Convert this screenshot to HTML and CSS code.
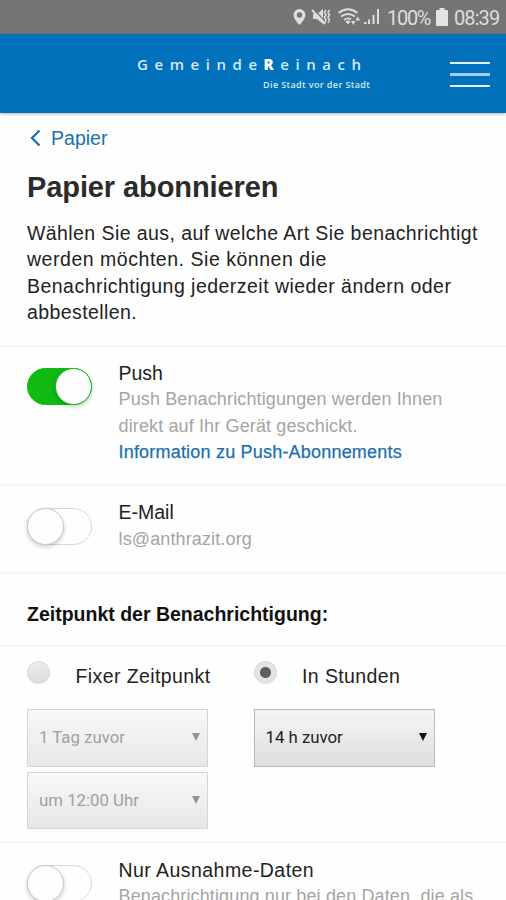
FILE: index.html
```html
<!DOCTYPE html>
<html lang="de">
<head>
<meta charset="utf-8">
<title>Papier abonnieren</title>
<link rel="stylesheet" href="styles.css">
</head>
<body>
<div class="status">
  <svg class="status-icons" width="90" height="20" viewBox="0 0 90 20">
    <path fill="#dedede" fill-rule="evenodd" d="M6.500 2a6 6 0 0 0-6 6c0 4 6 10 6 10s6-6 6-10a6 6 0 0 0-6-6zm0 3.200a2.700 2.700 0 1 1 0 5.400 2.700 2.700 0 0 1 0-5.400z"/>
    <path fill="#dedede" d="M20 7h4l6-5v15l-6-5h-4z"/>
    <path stroke="#757575" stroke-width="1.200" d="M21 2.500l12 13"/>
    <path stroke="#dedede" stroke-width="1.900" d="M19 3l13 14"/>
    <path fill="none" stroke="#dedede" stroke-width="1.500" d="M33 3l-1.500 2.500 1.500 2.500-1.500 2.500 1.500 2.500-1.500 3M36.500 3l-1.500 2.500 1.500 2.500-1.500 2.500 1.500 2.500-1.500 3"/>
    <path fill="none" stroke="#dedede" stroke-width="1.900" d="M45.500 6q9.500-7.500 19 0M48 9.500q7-5 14 0M51 13q4-3 7-.5"/>
    <path fill="#dedede" d="M52.500 14.500q2.500-2 5 0l-2.500 3zM58 14h4.500l-2.200 4zM62.500 13.500l2.200-4 2.300 4z"/>
    <path fill="#dedede" d="M71 15h2.500v2H71zM75 12.500h2v4.500h-2zM79.500 8h2v9h-2zM84 2h2v15h-2z"/>
  </svg>
  <span class="pct">100%</span>
  <svg class="battery" width="12" height="18" viewBox="0 0 12 18"><path fill="#e4e4e4" d="M3.500 0h5v2H11a1 1 0 0 1 1 1v14a1 1 0 0 1-1 1H1a1 1 0 0 1-1-1V3a1 1 0 0 1 1-1h2.500z"/></svg>
  <span class="clock">08:39</span>
</div>
<header class="header">
  <div class="brand">
    <div class="brand-name">Gemeinde<b>R</b>einach</div>
    <div class="brand-sub">Die Stadt vor der Stadt</div>
  </div>
  <div class="menu"><i></i><i></i><i></i></div>
</header>
<main>
  <section class="intro">
    <a class="back"><svg width="12" height="18" viewBox="0 0 12 18"><path d="M9.500 1.500L2 9l7.500 7.500" fill="none" stroke="#1b70ae" stroke-width="2.300"/></svg><span>Papier</span></a>
    <h1>Papier abonnieren</h1>
    <p>Wählen Sie aus, auf welche Art Sie benachrichtigt<br><span class="wide">werden möchten. Sie können die</span><br><span class="mid">Benachrichtigung jederzeit wieder ändern oder</span><br>abbestellen.</p>
  </section>
  <section class="row push">
    <div class="toggle on"><i></i></div>
    <div class="text">
      <div class="name">Push</div>
      <div class="desc">Push Benachrichtigungen werden Ihnen<br>direkt auf Ihr Gerät geschickt.</div>
      <a class="info">Information zu Push-Abonnements</a>
    </div>
  </section>
  <section class="row mail">
    <div class="toggle"><i></i></div>
    <div class="text">
      <div class="name">E-Mail</div>
      <div class="desc">ls@anthrazit.org</div>
    </div>
  </section>
  <section class="heading">Zeitpunkt der Benachrichtigung:</section>
  <section class="times">
    <div class="col">
      <label class="option"><i class="radio"></i><span>Fixer Zeitpunkt</span></label>
      <div class="select off"><span>1 Tag zuvor</span><i></i></div>
      <div class="select off"><span>um 12:00 Uhr</span><i></i></div>
    </div>
    <div class="col">
      <label class="option"><i class="radio checked"></i><span>In Stunden</span></label>
      <div class="select"><span>14 h zuvor</span><i></i></div>
    </div>
  </section>
  <section class="row exception">
    <div class="toggle"><i></i></div>
    <div class="text">
      <div class="name spaced">Nur Ausnahme-Daten</div>
      <div class="desc">Benachrichtigung nur bei den Daten, die als</div>
    </div>
  </section>
</main>
</body>
</html>
```
FILE: styles.css
```css
* { box-sizing: border-box; }
html, body { margin: 0; height: 900px; overflow: hidden; }
body { display: flex; flex-direction: column; background: #fefefe; color: #222; font: 19.5px/26.4px "Liberation Sans", Arial, sans-serif; white-space: nowrap; }
i { font-style: normal; }
svg { display: block; flex: none; }
.status { flex: none; height: 34px; background: #757575; display: flex; align-items: center; padding-left: 293px; color: #dedede; font: 20px/34px Roboto, sans-serif; }
.status-icons { width: 90px; }
.pct, .clock { padding-top: 2px; }
.pct { width: 48px; margin-left: 4px; letter-spacing: -1.3px; }
.battery { margin-left: 1px; }
.clock { margin-left: 6px; letter-spacing: -0.9px; }
.header { flex: none; height: 79px; background: #0071ba; display: flex; color: #d5ebf8; padding: 22px 16px 0 137px; justify-content: space-between; box-shadow: 0 1px 3px rgba(0,0,0,.3); position: relative; }
.brand { width: 240px; }
.brand-name { font: 600 15px/17px "Open Sans", sans-serif; letter-spacing: 6.55px; }
.brand-name b { color: #fff; }
.brand-sub { font: 600 9px/12px "Open Sans", sans-serif; margin: 6px 0 0 126px; letter-spacing: .39px; }
.menu { width: 40px; display: flex; flex-direction: column; gap: 10px; padding-top: 6px; }
.menu i { height: 2px; flex: none; background: #e4f2fb; }
.menu i:nth-child(2) { height: 3px; margin: -1px 0; background: #a5cce8; }
main { flex: 1; min-height: 0; overflow: hidden; }
.intro { height: 234px; padding: 12px 27px 0; border-bottom: 2px solid #f4f4f4; }
.back { display: flex; align-items: center; gap: 9px; height: 26px; padding-left: 3px; color: #1b70ae; letter-spacing: .02px; }
h1 { margin: 19px 0 0; font-size: 29px; line-height: 34px; color: #2b2b2b; letter-spacing: -.1px; }
.intro p { margin: 16px 0 0; letter-spacing: .42px; }
.intro .wide { letter-spacing: .53px; }
.intro .mid { letter-spacing: .47px; }
.row { display: flex; gap: 26.5px; padding: 13px 27px 0; border-bottom: 2px solid #f5f5f5; }
.push { height: 139px; }
.mail { height: 88px; }
.exception { height: 90px; border: 0; padding-top: 14px; padding-right: 0; }
.toggle { flex: none; width: 65px; height: 37px; margin-top: 9px; border: 1px solid #d8d8d8; border-radius: 19px; display: flex; }
.exception .toggle { margin-top: 8px; }
.toggle i { width: 37px; height: 37px; margin: -1px; border: 1px solid #c8c8c8; border-radius: 50%; background: #fefefe; box-shadow: 0 2px 4px rgba(0,0,0,.2); }
.toggle.on { margin-top: 8px; background: #11b913; border-color: #11b913; justify-content: flex-end; }
.toggle.on i { border-color: #11b913; }
.spaced { letter-spacing: .45px; }
.desc { color: #a5a5a5; font-size: 18px; letter-spacing: .13px; }
.mail .desc { padding-top: 1px; }
.info { color: #1b70ae; display: block; font-size: 18px; letter-spacing: .2px; -webkit-text-stroke: .25px #1b70ae; }
.heading { height: 73px; padding-top: 27px; padding-left: 27px; font-weight: bold; border-bottom: 2px solid #f4f4f4; color: #111; }
.times { height: 196px; display: grid; grid-template-columns: 226.500px 1fr; padding: 13px 0 0 27px; border-bottom: 2px solid #f5f5f5; }
.col { display: flex; flex-direction: column; }
.option { display: flex; height: 49px; gap: 25.500px; padding-top: 3px; letter-spacing: .4px; }
.radio { width: 23px; height: 23px; margin-top: -2px; border: 1px solid #d6d6d6; border-radius: 50%; background: linear-gradient(#ececec, #dcdcdc); }
.radio.checked { background: radial-gradient(circle, #5e5e5e 5px, #e4e4e4 6px); }
.select { width: 181px; height: 58px; margin-bottom: 5px; padding: 0 7px 2px 11px; display: flex; align-items: center; justify-content: space-between; border: 1px solid #b8b8b8; background: linear-gradient(#f5f5f5, #dedede); font: 16.8px/24px Roboto, sans-serif; }
.select + .select { height: 57px; }
.select i { border: 4.500px solid transparent; border-top: 8px solid #111; border-bottom: 0; width: 0; }
.select.off { color: #a0a0a0; border-color: #d5d5d5; background: linear-gradient(#f8f8f8, #e7e7e7); }
.select.off i { border-top-color: #939393; }
```
